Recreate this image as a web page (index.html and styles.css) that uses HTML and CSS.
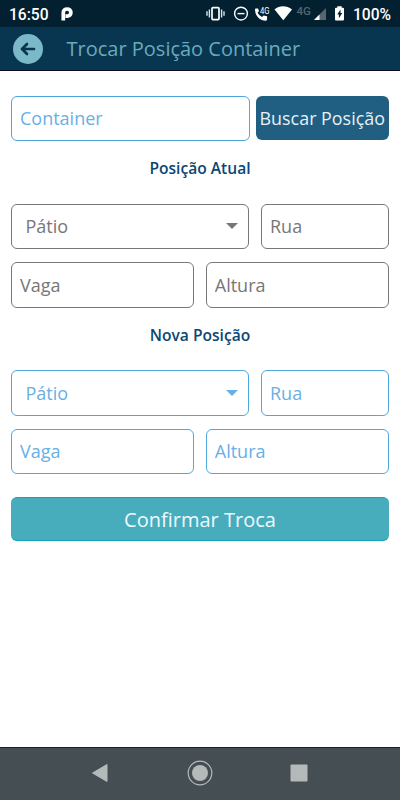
FILE: index.html
```
<!DOCTYPE html>
<html lang="pt-BR">
<head>
    <meta charset="UTF-8">
    <meta name="viewport" content="width=device-width, initial-scale=1.0">
    <title>Trocar Posição Container</title>
    <link rel="stylesheet" href="styles.css">
</head>
<body>
    <div class="status-bar">
        <span class="time">16:50</span>
        <svg class="app-icon" width="12" height="15" viewBox="0 0 12 15">
            <path d="M2.300 13.500V5.600C2.300 3.200 4 2 6.100 2s3.800 1.300 3.800 3.500S8.300 9.100 6.200 9.100H4.500" fill="none" stroke="#fff" stroke-width="3.700"/>
        </svg>
        <svg class="status-icons" width="143" height="20" viewBox="206 4 143 20">
            <!-- vibrate -->
            <rect x="212" y="7.600" width="7" height="12" rx="1" fill="none" stroke="#fff" stroke-width="1.700"/>
            <path d="M209.400 9.500v8M207 11.300v4.400M221.600 9.500v8M224 11.300v4.400" stroke="#dfe5e8" stroke-width="1.400"/>
            <!-- do not disturb -->
            <circle cx="241" cy="13.600" r="6.400" fill="none" stroke="#fff" stroke-width="1.400"/>
            <path d="M237.500 13.600h7" stroke="#fff" stroke-width="1.400"/>
            <!-- call over 4G -->
            <path d="M255.800 8.400h2.300q.5 1.900.9 2.600l-1.400 1.700q1.500 2.900 4.400 4.300l1.600-1.500 3.500.8v3q0 1.400-1.200 1.400C259.200 20.500 255 15.500 255 9.200q0-.8.8-.8z" fill="#fff"/>
            <text x="260" y="13.700" class="small-4g" textLength="9.500" lengthAdjust="spacingAndGlyphs">4G</text>
            <!-- wifi -->
            <path d="M274.500 9.500c5-4.200 12-4.200 17.500 0l-8.700 10.800z" fill="#fff"/>
            <!-- signal -->
            <text x="296.500" y="15" class="dim-4g">4G</text>
            <path d="M326 8v12h-12z" fill="#56656f"/>
            <path d="M319.500 14.500v5.500h-5.500z" fill="#fff"/>
            <!-- battery -->
            <path d="M337.300 6.200h4.400v1.500h1.300q1 0 1 1v10.700q0 1.100-1 1.100h-7q-1 0-1-1.100V8.700q0-1 1-1h1.300z" fill="#fff"/>
            <path d="M340.500 9.500l-3.300 5h1.700v3.800l3.400-5.200h-1.800z" fill="#02202f"/>
        </svg>
        <span class="battery-level">100%</span>
    </div>

    <header class="app-bar">
        <button class="back-button" type="button" aria-label="Voltar">
            <svg width="30" height="30" viewBox="0 0 30 30">
                <path d="M21 15H9.600M14 10l-5 5 5 5" fill="none" stroke="#083650" stroke-width="2.700" stroke-linecap="round" stroke-linejoin="round"/>
            </svg>
        </button>
        <h1>Trocar Posição Container</h1>
    </header>

    <main class="content">
        <div class="row search-row">
            <input class="field" type="text" placeholder="Container">
            <button class="search-button" type="button">Buscar Posição</button>
        </div>

        <h2>Posição Atual</h2>
        <section class="position current">
            <div class="row row-street">
                <div class="field select">Pátio</div>
                <input class="field" type="text" placeholder="Rua" readonly>
            </div>
            <div class="row row-half">
                <input class="field" type="text" placeholder="Vaga" readonly>
                <input class="field" type="text" placeholder="Altura" readonly>
            </div>
        </section>

        <h2>Nova Posição</h2>
        <section class="position">
            <div class="row row-street">
                <div class="field select">Pátio</div>
                <input class="field" type="text" placeholder="Rua">
            </div>
            <div class="row row-half">
                <input class="field" type="text" placeholder="Vaga">
                <input class="field" type="text" placeholder="Altura">
            </div>
        </section>

        <button class="confirm-button" type="button">Confirmar Troca</button>
    </main>

    <nav class="nav-bar">
        <svg width="18" height="20" viewBox="0 0 18 20">
            <path d="M1.500 10L16 1.500v17z" fill="#b4b9b9" stroke="#b4b9b9" stroke-linejoin="round"/>
        </svg>
        <svg width="26" height="26" viewBox="0 0 26 26">
            <circle cx="13" cy="13" r="11.800" fill="none" stroke="#b4b9b9" stroke-width="1.200"/>
            <circle cx="13" cy="13" r="8" fill="#b4b9b9"/>
        </svg>
        <svg width="18" height="18" viewBox="0 0 18 18">
            <rect x="0.500" y="0.500" width="17" height="17" rx="1" fill="#b4b9b9"/>
        </svg>
    </nav>
</body>
</html>
```

FILE: styles.css
```
* {
    box-sizing: border-box;
}
body {
    margin: 0;
    height: 100vh;
    display: flex;
    flex-direction: column;
    background: #fff;
    font-family: 'Open Sans', sans-serif;
    overflow: hidden;
}
button {
    font-family: inherit;
    border: none;
    padding: 0;
    cursor: pointer;
}

/* Status bar */
.status-bar {
    flex: none;
    display: flex;
    align-items: center;
    height: 27px;
    padding: 1px 9px 0;
    background: #02202f;
    color: #fff;
    font-family: Roboto, sans-serif;
    font-size: 15.6px;
    font-weight: 500;
}
.time,
.battery-level {
    padding-top: 1px;
}
.app-icon {
    margin-left: 12px;
}
.status-icons {
    margin-left: auto;
    margin-right: 4px;
}
.small-4g {
    fill: #fff;
    font-size: 8.5px;
    font-weight: 400;
}
.dim-4g {
    fill: #56656f;
    font-size: 11.5px;
    font-weight: 500;
}

/* Header */
.app-bar {
    flex: none;
    display: flex;
    align-items: center;
    height: 44px;
    padding: 0 12.5px;
    background: #083650;
    border-bottom: 1px solid #0b0824;
}
.back-button {
    width: 30px;
    height: 30px;
    margin-right: 24px;
    border-radius: 50%;
    background: #7bb9c8;
}
.back-button svg {
    display: block;
}
h1 {
    margin: 0;
    color: #6baabb;
    font-size: 20px;
    font-weight: 400;
}

/* Form */
.content {
    flex: 1;
    padding: 25px 11px 0;
}
.row {
    display: grid;
}
.search-row {
    grid-template-columns: 239px 1fr;
    column-gap: 5.5px;
}
.row-street {
    grid-template-columns: 238px 1fr;
    column-gap: 12px;
}
.row-half {
    grid-template-columns: 1fr 1fr;
    column-gap: 11.5px;
}
.position {
    display: grid;
    row-gap: 13px;
}
.field {
    width: 100%;
    min-width: 0;
    height: 45.5px;
    padding: 0 8px;
    border: 1px solid #4fa7de;
    border-radius: 6px;
    background: #fff;
    color: #68b0e5;
    font-family: inherit;
    font-size: 18px;
    outline: none;
}
.search-row .field {
    height: 45px;
    padding-bottom: 1px;
}
.field::placeholder {
    color: inherit;
    opacity: 1;
}
.select {
    display: flex;
    align-items: center;
    justify-content: space-between;
    padding: 0 10px 0 13.5px;
}
.select::after {
    content: "";
    border: 6.5px solid transparent;
    border-top-color: currentColor;
    border-bottom: none;
}
.current .field {
    border-color: #777;
    color: #777;
}
.search-button {
    height: 44px;
    border-radius: 6px;
    background: #215f82;
    color: #e6f0f6;
    font-size: 17.9px;
    white-space: nowrap;
}
h2 {
    margin: 0;
    height: 62.6px;
    padding-top: 15px;
    color: #0b4774;
    font-size: 15.6px;
    font-weight: 600;
    line-height: 24px;
    text-align: center;
}
.confirm-button {
    display: block;
    width: 100%;
    height: 44px;
    margin-top: 22.8px;
    padding-top: 1px;
    border-radius: 6px;
    background: #47adbd;
    border-top: 1px solid #16a3b5;
    border-bottom: 1px solid #16a3b5;
    color: #eefafc;
    font-size: 20px;
}

/* Android navigation */
.nav-bar {
    flex: none;
    display: flex;
    align-items: center;
    justify-content: space-between;
    height: 53px;
    padding: 0 92px 2px 91px;
    background: #454e53;
    border-top: 1px solid #0c2734;
}
```
